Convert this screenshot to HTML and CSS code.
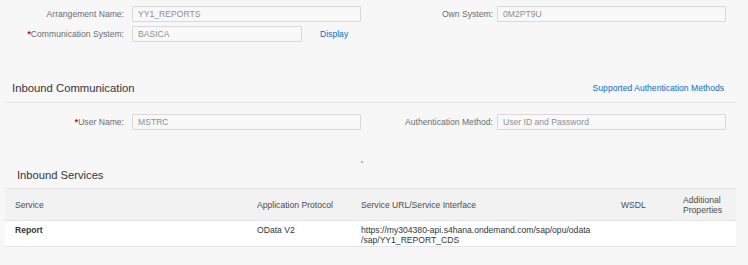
FILE: index.html
```html
<!DOCTYPE html>
<html>
<head>
<meta charset="utf-8">
<link rel="stylesheet" href="styles.css">
</head>
<body>
<div class="page">
  <div class="form top">
    <div class="row">
      <label class="lbl">Arrangement Name:</label>
      <div class="field"><div class="input">YY1_REPORTS</div></div>
      <label class="lbl lbl-r">Own System:</label>
      <div class="field"><div class="input">0M2PT9U</div></div>
    </div>
    <div class="row">
      <label class="lbl"><span class="req">*</span>Communication System:</label>
      <div class="field"><div class="input short">BASICA</div><a class="link display">Display</a></div>
    </div>
  </div>

  <div class="section-head">
    <h2 class="title">Inbound Communication</h2>
    <a class="link">Supported Authentication Methods</a>
  </div>

  <div class="form">
    <div class="row">
      <label class="lbl"><span class="req">*</span>User Name:</label>
      <div class="field"><div class="input">MSTRC</div></div>
      <label class="lbl lbl-r">Authentication Method:</label>
      <div class="field"><div class="input">User ID and Password</div></div>
    </div>
  </div>

  <div class="dot-row"><span class="dot"></span></div>

  <h2 class="title services">Inbound Services</h2>

  <div class="table">
    <div class="tr thead">
      <div class="td c1">Service</div>
      <div class="td c2">Application Protocol</div>
      <div class="td c3">Service URL/Service Interface</div>
      <div class="td c4">WSDL</div>
      <div class="td c5">Additional Properties</div>
    </div>
    <div class="tr tbody">
      <div class="td c1 strong">Report</div>
      <div class="td c2">OData V2</div>
      <div class="td c3">https://my304380-api.s4hana.ondemand.com/sap/opu/odata<br>/sap/YY1_REPORT_CDS</div>
      <div class="td c4"></div>
      <div class="td c5"></div>
    </div>
  </div>
</div>
</body>
</html>
```

FILE: styles.css
```css
html, body {
  margin: 0;
  padding: 0;
  background: #f7f7f7;
}
body {
  font-family: "Liberation Sans", Arial, sans-serif;
  color: #32363a;
  width: 748px;
  height: 265px;
  overflow: hidden;
}
.page {
  display: flex;
  flex-direction: column;
}
.form {
  display: flex;
  flex-direction: column;
  gap: 4px;
}
.form.top {
  padding-top: 6px;
}
.row {
  display: grid;
  grid-template-columns: 132px 229px 136px 229px;
  height: 16px;
  align-items: center;
}
.lbl {
  font-size: 8.6px;
  color: #6a6d70;
  text-align: right;
  padding-right: 8px;
  white-space: nowrap;
}
.lbl-r {
  padding-right: 4px;
}
.req {
  color: #d0021b;
  font-weight: bold;
}
.field {
  display: flex;
  align-items: center;
  height: 16px;
}
.input {
  box-sizing: border-box;
  width: 229px;
  height: 16px;
  border: 1px solid #d9d9d9;
  border-radius: 1px;
  background: #f8f8f8;
  color: #8e9194;
  font-size: 8.6px;
  line-height: 14px;
  padding-left: 5px;
}
.input.short {
  width: 170px;
}
.link {
  color: #0a6ed1;
  font-size: 8.6px;
  cursor: pointer;
}
.display {
  margin-left: 18px;
}
.section-head {
  margin: 31px 12px 0 5px;
  height: 30px;
  box-sizing: border-box;
  padding: 0 12px 0 7px;
  border-bottom: 1px solid #e5e5e5;
  display: flex;
  justify-content: space-between;
  align-items: center;
}
.section-head + .form {
  margin-top: 11px;
}
.title {
  margin: 0;
  font-size: 11.3px;
  font-weight: normal;
  color: #32363a;
}
.dot-row {
  height: 0;
}
.dot {
  display: block;
  width: 2px;
  height: 2px;
  background: #f2a0a0;
  margin: 31px 0 0 361px;
}
.services {
  margin-top: 38px;
  margin-left: 17px;
  height: 14px;
  line-height: 14px;
  font-size: 11.2px;
}
.table {
  margin: 6px 12px 0 5px;
  border-top: 1px solid #e5e5e5;
  border-bottom: 1px solid #e5e5e5;
}
.tr {
  display: flex;
  font-size: 8.6px;
}
.thead {
  background: #f2f2f2;
  height: 31px;
  align-items: center;
  color: #4a4d50;
  border-bottom: 1px solid #e5e5e5;
}
.tbody {
  background: #ffffff;
  height: 25px;
  align-items: flex-start;
  padding-top: 4px;
  box-sizing: border-box;
}
.td {
  box-sizing: border-box;
  padding-left: 10px;
  line-height: 10px;
}
.c1 { width: 242px; }
.c2 { width: 104px; }
.c3 { width: 260px; }
.c4 { width: 62px; }
.c5 { flex: 1; padding-left: 10px; }
.strong { font-weight: bold; }
```
